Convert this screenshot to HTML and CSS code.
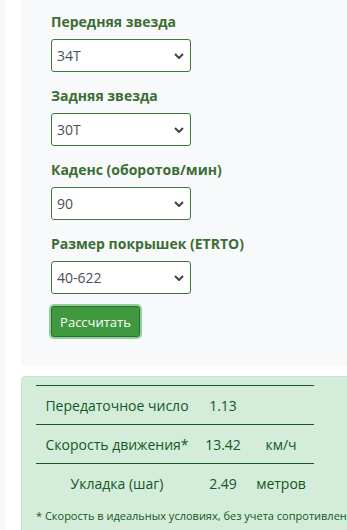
FILE: index.html
```html
<!DOCTYPE html>
<html lang="ru">
<head>
    <meta charset="UTF-8">
    <meta name="viewport" content="width=device-width, initial-scale=1.0">
    <title>Калькулятор передач</title>
    <link rel="stylesheet" href="styles.css">
</head>
<body>
    <div class="page">
        <div class="form-panel">
            <div class="field">
                <label for="front">Передняя звезда</label>
                <select id="front">
                    <option>34T</option>
                </select>
            </div>
            <div class="field">
                <label for="rear">Задняя звезда</label>
                <select id="rear">
                    <option>30T</option>
                </select>
            </div>
            <div class="field">
                <label for="cadence">Каденс (оборотов/мин)</label>
                <select id="cadence">
                    <option>90</option>
                </select>
            </div>
            <div class="field">
                <label for="tire">Размер покрышек (ETRTO)</label>
                <select id="tire">
                    <option>40-622</option>
                </select>
            </div>
            <button class="calc-btn">Рассчитать</button>
        </div>

        <div class="result-panel">
            <table class="results">
                <tr>
                    <td class="name">Передаточное число</td>
                    <td class="value">1.13</td>
                    <td class="unit"></td>
                </tr>
                <tr>
                    <td class="name">Скорость движения*</td>
                    <td class="value">13.42</td>
                    <td class="unit">км/ч</td>
                </tr>
                <tr>
                    <td class="name">Укладка (шаг)</td>
                    <td class="value">2.49</td>
                    <td class="unit">метров</td>
                </tr>
            </table>
            <p class="note">* Скорость в идеальных условиях, без учета сопротивления воздуха и качения</p>
        </div>
    </div>
</body>
</html>
```

FILE: styles.css
```css
body {
    margin: 0;
    background-color: #f8f9fa;
    font-family: "Open Sans", "Noto Sans", sans-serif;
    overflow: hidden;
}

.page {
    margin-left: 6px;
    padding-left: 15px;
    background-color: white;
    width: 600px;
    min-height: 530px;
}

.form-panel {
    background-color: #f8f9fa;
    padding: 12px 30px 29px;
}

.field {
    margin-bottom: 14px;
}

.field:last-of-type {
    margin-bottom: 12px;
}

.field label {
    display: block;
    font-weight: bold;
    font-size: 14px;
    color: #3b6d34;
    line-height: 20px;
    margin-bottom: 7px;
}

.field select {
    display: block;
    width: 140px;
    height: 33px;
    padding: 0 24px 0 5px;
    border: 1px solid #3c7a3c;
    border-radius: 3px;
    background-color: white;
    font-family: inherit;
    font-size: 14px;
    color: #495057;
    appearance: none;
    background-image: url("data:image/svg+xml,%3Csvg xmlns='http://www.w3.org/2000/svg' width='10' height='6' viewBox='0 0 10 6'%3E%3Cpath d='M1 1l4 4 4-4' fill='none' stroke='%23444' stroke-width='2'/%3E%3C/svg%3E");
    background-repeat: no-repeat;
    background-position: right 6px center;
}

.calc-btn {
    display: block;
    padding: 0 8px;
    height: 31px;
    width: 89px;
    border: 1px solid #2f6b30;
    border-radius: 3px;
    background-color: #40993f;
    color: white;
    font-family: inherit;
    font-size: 13px;
    box-shadow: 0 0 0 2px #8ed19a;
    cursor: pointer;
}

.result-panel {
    margin-top: 10px;
    background-color: #d4edda;
    border: 1px solid #c3e6cb;
    border-radius: 4px;
    padding: 8px 14px 10px;
    color: #155724;
}

.results {
    border-collapse: collapse;
    width: 278px;
    font-size: 14px;
}

.results td {
    border-top: 1px solid #155724;
    text-align: center;
    height: 38px;
    padding: 0 6px;
}

.results .name {
    width: 150px;
}

.results .value {
    width: 38px;
}

.note {
    margin: 6px 0 0;
    font-size: 11px;
    white-space: nowrap;
}
```
